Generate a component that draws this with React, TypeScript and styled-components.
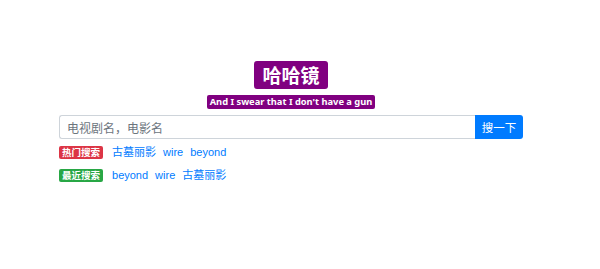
import React from "react";
import styled, { createGlobalStyle } from "styled-components";

const Global = createGlobalStyle`
  html, body { margin: 0; padding: 0; background: #fff; }
  body { font-family: "Noto Sans CJK SC", "Noto Sans", sans-serif; }
`;

const Page = styled.div`
  width: 582px;
  padding-top: 61px;
  display: flex;
  flex-direction: column;
  align-items: center;
`;

const Title = styled.div`
  background: #800080;
  color: #fff;
  font-weight: 700;
  font-size: 19px;
  line-height: 28px;
  height: 28px;
  padding: 0 8px;
  border-radius: 3px;
`;

const Subtitle = styled.div`
  margin-top: 6px;
  background: #800080;
  color: #fff;
  font-weight: 700;
  font-size: 9.3px;
  line-height: 14px;
  padding: 0 3px;
  border-radius: 2px;
  font-family: "Noto Sans", sans-serif;
`;

const Box = styled.div`
  margin-top: 6px;
  width: 464px;
  display: flex;
  flex-direction: column;
`;

const SearchRow = styled.div`
  display: flex;
  height: 24px;
`;

const Input = styled.input`
  flex: 1;
  box-sizing: border-box;
  height: 24px;
  border: 1px solid #ced4da;
  border-right: none;
  border-radius: 3px 0 0 3px;
  padding: 0 7px;
  font-family: "Noto Sans CJK SC", sans-serif;
  font-size: 12px;
  color: #495057;
  outline: none;
  &::placeholder { color: #6c757d; }
`;

const Button = styled.button`
  width: 48px;
  height: 24px;
  border: none;
  background: #007bff;
  color: #fff;
  border-radius: 0 3px 3px 0;
  font-family: "Noto Sans CJK SC", sans-serif;
  font-size: 11.5px;
  padding: 0;
`;

const TagRow = styled.div<{ $top: number }>`
  margin-top: ${(p) => p.$top}px;
  display: flex;
  align-items: center;
  height: 13px;
`;

const Badge = styled.span<{ $bg: string }>`
  background: ${(p) => p.$bg};
  color: #fff;
  font-size: 9.5px;
  font-weight: 700;
  line-height: 13px;
  height: 13px;
  padding: 0 3px;
  border-radius: 2px;
  margin-right: 9px;
`;

const Link = styled.a`
  color: #007bff;
  font-size: 11px;
  line-height: 13px;
  margin-right: 7px;
  text-decoration: none;
  font-family: "Liberation Sans", "Noto Sans CJK SC", sans-serif;
`;

export default function App() {
  return (
    <>
      <Global />
      <Page>
        <Title>哈哈镜</Title>
        <Subtitle>And I swear that I don't have a gun</Subtitle>
        <Box>
          <SearchRow>
            <Input placeholder="电视剧名，电影名" />
            <Button>搜一下</Button>
          </SearchRow>
          <TagRow $top={7}>
            <Badge $bg="#dc3545">热门搜索</Badge>
            <Link href="#">古墓丽影</Link>
            <Link href="#">wire</Link>
            <Link href="#">beyond</Link>
          </TagRow>
          <TagRow $top={10}>
            <Badge $bg="#28a745">最近搜索</Badge>
            <Link href="#">beyond</Link>
            <Link href="#">wire</Link>
            <Link href="#">古墓丽影</Link>
          </TagRow>
        </Box>
      </Page>
    </>
  );
}
